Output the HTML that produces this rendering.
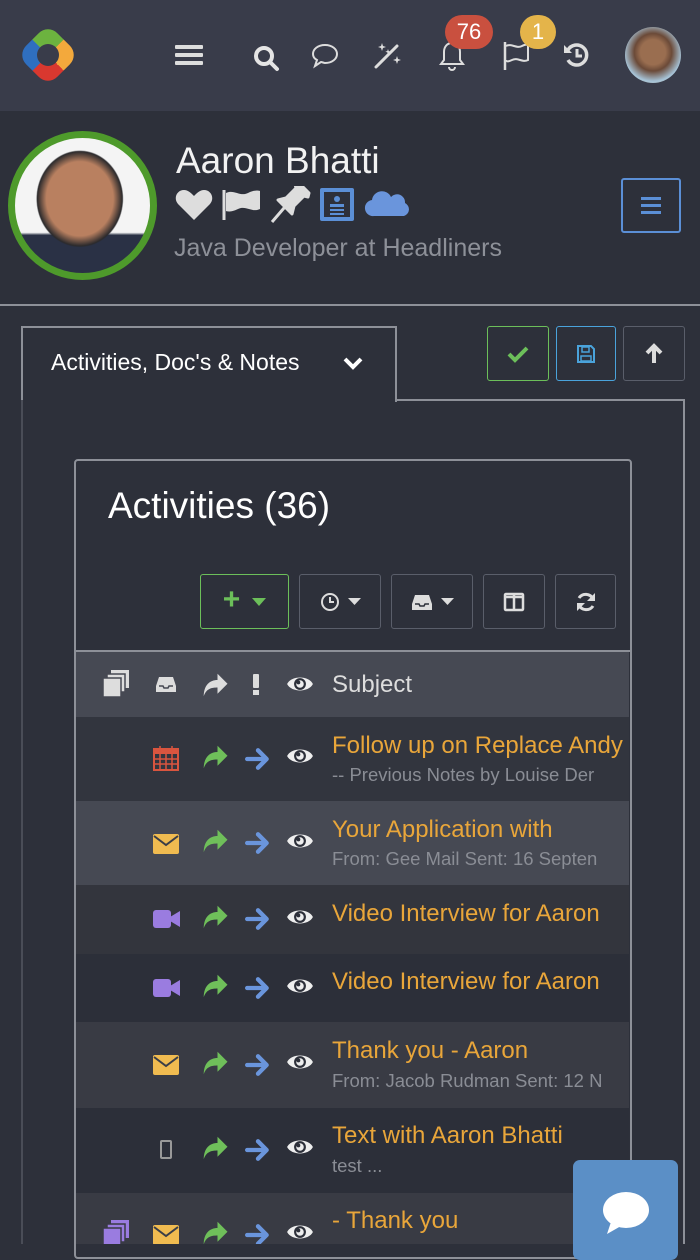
<!DOCTYPE html>
<html><head><meta charset="utf-8"><style>
*{margin:0;padding:0;box-sizing:border-box}
body{width:700px;height:1244px;overflow:hidden;background:#2d303a;font-family:"Liberation Sans",sans-serif;position:relative;color:#fff}
.a{position:absolute}
.top{left:0;top:0;width:700px;height:111px;background:#393c4a}
.btn{position:absolute;border:1.5px solid #5a5e6a;border-radius:3px;display:flex;align-items:center;justify-content:center}
.row{position:absolute;left:76px;width:553px}
.t{position:absolute;font-size:24px;color:#e9a63a;white-space:nowrap}
.s{position:absolute;font-size:18.5px;color:#8a8d95;white-space:nowrap}
.clip{position:absolute;left:0;top:0;width:629px;height:1244px;overflow:hidden}
svg{display:block}
</style></head><body>
<svg width="0" height="0" style="position:absolute">
<defs>
<symbol id="rep" viewBox="0 0 24 24"><path d="M3 21C3 12 8 8 14 8V3l8 8-8 8v-5C9 14 5 15 3 21Z" fill="#6fbf5a"/></symbol>
<symbol id="arr" viewBox="0 0 24 24"><path d="M2 12h17M12 4l8 8-8 8" stroke="#6a95dc" stroke-width="4" fill="none" stroke-linecap="round" stroke-linejoin="round"/></symbol>
<symbol id="eye" viewBox="0 0 26 18"><path d="M1 9C5 1 21 1 25 9C21 17 5 17 1 9Z" fill="#eee"/><circle cx="13" cy="9" r="5.5" fill="#2d303a"/><circle cx="13" cy="9" r="3.5" fill="#eee"/><circle cx="11.5" cy="7.5" r="1.8" fill="#2d303a"/></symbol>
<symbol id="env" viewBox="0 0 26 20"><rect x="0" y="0" width="26" height="20" rx="2" fill="#f0bb50"/><path d="M1 2l12 9 12-9" stroke="#3a3d47" stroke-width="2" fill="none"/></symbol>
<symbol id="vid" viewBox="0 0 28 20"><rect x="0" y="1" width="18" height="18" rx="3" fill="#9a7ce0"/><path d="M17 8l10-6v16l-10-6z" fill="#9a7ce0"/></symbol>
</defs></svg>

<div class="a top"></div>
<!-- logo -->
<div class="a" style="left:26px;top:33px;width:44px;height:44px;transform:rotate(45deg);border-radius:13px;background:conic-gradient(from 0deg,#f3a93c 0 25%,#d9382f 25% 50%,#2f6fc0 50% 75%,#6cb33f 75% 100%)"></div>
<div class="a" style="left:37px;top:44px;width:22px;height:22px;border-radius:50%;background:#393c4a"></div>
<!-- hamburger -->
<div class="a" style="left:175px;top:45px;width:28px;height:4px;background:#ddd;border-radius:1px;box-shadow:0 8px 0 #ddd,0 16px 0 #ddd"></div>
<svg class="a" style="left:252px;top:44px" width="28" height="28" viewBox="0 0 28 28"><circle cx="12" cy="12" r="8" stroke="#e5e5e5" stroke-width="4" fill="none"/><path d="M18 18l7 7" stroke="#e5e5e5" stroke-width="4" stroke-linecap="round"/></svg>
<svg class="a" style="left:310px;top:42px" width="30" height="28" viewBox="0 0 30 28"><path d="M15 3C8 3 3 7 3 12c0 3 2 5 4 6l-2 6 6-4c1 0 3 1 4 1 7 0 12-4 12-9S22 3 15 3Z" stroke="#ddd" stroke-width="2" fill="none"/></svg>
<svg class="a" style="left:373px;top:40px" width="30" height="30" viewBox="0 0 30 30"><path d="M3 27L24 6" stroke="#ddd" stroke-width="3" stroke-linecap="round"/><path d="M9 3l1 3 3 1-3 1-1 3-1-3-3-1 3-1zM24 16l1 3 3 1-3 1-1 3-1-3-3-1 3-1zM15 9l.7 2 2 .7-2 .7-.7 2-.7-2-2-.7 2-.7z" fill="#ddd"/></svg>
<svg class="a" style="left:438px;top:40px" width="28" height="32" viewBox="0 0 28 32"><path d="M14 3c-5 0-8 4-8 9v8l-3 4h22l-3-4v-8c0-5-3-9-8-9Z" stroke="#ddd" stroke-width="2" fill="none"/><path d="M11 27a3 3 0 0 0 6 0" stroke="#ddd" stroke-width="2" fill="none"/></svg>
<div class="a" style="left:445px;top:15px;width:48px;height:34px;border-radius:17px;background:#c9503f;font-size:22px;text-align:center;line-height:34px">76</div>
<svg class="a" style="left:502px;top:40px" width="30" height="32" viewBox="0 0 30 32"><path d="M3 2v28" stroke="#ddd" stroke-width="2.5"/><path d="M4 6c6-3 10 3 16 0s6 0 6 0v14c-6 3-10-3-16 0s-6 0-6 0" stroke="#ddd" stroke-width="2" fill="none"/></svg>
<div class="a" style="left:520px;top:15px;width:36px;height:34px;border-radius:17px;background:#e4b44a;font-size:22px;text-align:center;line-height:34px">1</div>
<svg class="a" style="left:562px;top:40px" width="30" height="30" viewBox="0 0 30 30"><path d="M6 10a10 10 0 1 1 0 10" stroke="#ddd" stroke-width="3.5" fill="none"/><path d="M2 5v8h8z" fill="#ddd"/><path d="M15 9v7h5" stroke="#ddd" stroke-width="3" fill="none"/></svg>
<div class="a" style="left:625px;top:27px;width:56px;height:56px;border-radius:50%;background:radial-gradient(circle at 50% 45%,#9a6e50 0 30%,#6b4a38 45%,#a7c4d8 70%,#b79f7e 100%)"></div>

<!-- profile -->
<div class="a" style="left:8px;top:131px;width:149px;height:149px;border-radius:50%;border:7px solid #4e9a2b;background:radial-gradient(ellipse 45% 50% at 48% 45%,#b98060 0 55%,#2b2a2c 70%,transparent 72%),linear-gradient(#f4f4f4 0 70%,#2a3145 72%)"></div>
<div class="a" style="left:176px;top:140px;font-size:37px;color:#f2f2f2">Aaron Bhatti</div>
<svg class="a" style="left:174px;top:186px" width="240" height="38" viewBox="0 0 240 38">
<path d="M20 34L4 18C-1 12 3 4 10 4c4 0 7 3 10 6 3-3 6-6 10-6 7 0 11 8 6 14Z" fill="#ddd"/>
<path d="M50 4v30" stroke="#ddd" stroke-width="3"/><path d="M52 7c8-4 14 4 22 0s12-2 12-2v18c-8 4-14-4-22 0s-12 2-12 2Z" fill="#ddd"/>
<path d="M98 36l12-14M104 14l14 14 2-8 10-10 4 1 1-4-10-10-4 1 1 4-10 10z" stroke="#ddd" stroke-width="3" fill="#ddd" stroke-linejoin="round"/>
<rect x="146" y="2" width="34" height="33" rx="2" fill="#5b8fd6"/><rect x="150" y="6" width="26" height="25" fill="#2d303a"/><circle cx="163" cy="13" r="3" fill="#5b8fd6"/><rect x="156" y="18" width="14" height="3" fill="#5b8fd6"/><rect x="156" y="23" width="14" height="2" fill="#5b8fd6"/><rect x="156" y="27" width="14" height="2" fill="#5b8fd6"/>
<path d="M200 30a8 8 0 0 1-2-16 10 10 0 0 1 19-3 8 8 0 0 1 14 6 7 7 0 0 1-1 13z" fill="#6a95dc"/>
</svg>
<div class="a" style="left:174px;top:234px;font-size:25px;color:#8d9098;font-weight:300">Java Developer at Headliners</div>
<div class="a" style="left:621px;top:178px;width:60px;height:55px;border:2px solid #5b8fd6;border-radius:3px"></div>
<div class="a" style="left:641px;top:197px;width:20px;height:3px;background:#5b8fd6;box-shadow:0 7px 0 #5b8fd6,0 14px 0 #5b8fd6"></div>

<div class="a" style="left:0;top:304px;width:700px;height:2px;background:#8d9098"></div>

<!-- tab panel -->
<div class="a" style="left:21px;top:326px;width:376px;height:76px;border:2px solid #8d9098;border-bottom:none;background:#2d303a"></div>
<div class="a" style="left:395px;top:399px;width:290px;height:2px;background:#8d9098"></div>
<div class="a" style="left:683px;top:399px;width:2px;height:845px;background:#8d9098"></div>
<div class="a" style="left:21px;top:400px;width:2px;height:844px;background:#4a4d57"></div>
<div class="a" style="left:51px;top:349px;font-size:23px;color:#fff">Activities, Doc's &amp; Notes</div>
<svg class="a" style="left:342px;top:356px" width="22" height="16" viewBox="0 0 22 16"><path d="M3 3l8 8 8-8" stroke="#fff" stroke-width="4" fill="none"/></svg>
<div class="btn" style="left:487px;top:326px;width:62px;height:55px;border-color:#6cbf5a"><svg width="22" height="18" viewBox="0 0 22 18"><path d="M2 9l6 6L20 3" stroke="#6cbf5a" stroke-width="4" fill="none"/></svg></div>
<div class="btn" style="left:556px;top:326px;width:60px;height:55px;border-color:#4aa3db"><svg width="20" height="20" viewBox="0 0 20 20"><path d="M2 2h13l3 3v13H2z" stroke="#4aa3db" stroke-width="2" fill="none"/><rect x="6" y="3" width="7" height="5" stroke="#4aa3db" stroke-width="1.5" fill="none"/><rect x="5" y="12" width="10" height="5" stroke="#4aa3db" stroke-width="1.5" fill="none"/></svg></div>
<div class="btn" style="left:623px;top:326px;width:62px;height:55px"><svg width="20" height="22" viewBox="0 0 20 22"><path d="M10 20V4M3 10l7-7 7 7" stroke="#ddd" stroke-width="4" fill="none"/></svg></div>

<!-- inner box -->
<div class="a" style="left:74px;top:459px;width:558px;height:800px;border:2px solid #8d9098;border-radius:4px"></div>
<div class="a" style="left:108px;top:485px;font-size:37px;color:#fff">Activities (36)</div>
<div class="btn" style="left:200px;top:574px;width:89px;height:55px;border-color:#6cbf5a"><span style="color:#6cbf5a;font-size:30px;font-weight:bold;margin-right:12px;margin-top:-4px">+</span><svg width="14" height="8"><path d="M0 0h14L7 8z" fill="#6cbf5a"/></svg></div>
<div class="btn" style="left:299px;top:574px;width:82px;height:55px"><svg width="20" height="20" viewBox="0 0 20 20" style="margin-right:8px"><circle cx="10" cy="10" r="8" stroke="#ddd" stroke-width="2" fill="none"/><path d="M10 5v5h4" stroke="#ddd" stroke-width="2" fill="none"/></svg><svg width="13" height="7"><path d="M0 0h13L6.5 7z" fill="#ddd"/></svg></div>
<div class="btn" style="left:391px;top:574px;width:82px;height:55px"><svg width="22" height="18" viewBox="0 0 22 18" style="margin-right:8px"><path d="M4 2h14l3 9v6H1v-6z" fill="#ddd"/><path d="M4 11h4l1 2h4l1-2h4" stroke="#2d303a" stroke-width="1.5" fill="none"/></svg><svg width="13" height="7"><path d="M0 0h13L6.5 7z" fill="#ddd"/></svg></div>
<div class="btn" style="left:483px;top:574px;width:62px;height:55px"><svg width="22" height="20" viewBox="0 0 22 20"><rect x="2" y="2" width="18" height="16" rx="1" stroke="#ddd" stroke-width="2.5" fill="none"/><path d="M11 2v16M2 5h18" stroke="#ddd" stroke-width="2.5"/></svg></div>
<div class="btn" style="left:555px;top:574px;width:61px;height:55px"><svg width="22" height="22" viewBox="0 0 22 22"><path d="M18 8A8 8 0 0 0 4 7M4 14a8 8 0 0 0 14 1" stroke="#ddd" stroke-width="3" fill="none"/><path d="M20 2v8h-8zM2 20v-8h8z" fill="#ddd"/></svg></div>
<div class="a" style="left:74px;top:650px;width:558px;height:2px;background:#8d9098"></div>

<!-- header row -->
<div class="row" style="top:652px;height:65px;background:#464953"></div>
<svg class="a" style="left:103px;top:670px" width="28" height="28" viewBox="0 0 28 28"><rect x="8" y="0" width="18" height="18" fill="#ddd"/><rect x="4" y="4" width="18" height="18" fill="#ddd" stroke="#464953" stroke-width="1.5"/><rect x="0" y="8" width="18" height="19" fill="#ddd" stroke="#464953" stroke-width="1.5"/></svg>
<svg class="a" style="left:155px;top:675px" width="22" height="18" viewBox="0 0 22 18"><path d="M4 2h14l3 9v6H1v-6z" fill="#ddd"/><path d="M4 11h4l1 2h4l1-2h4" stroke="#464953" stroke-width="1.5" fill="none"/></svg>
<svg class="a" style="left:200px;top:670px" width="30" height="30" viewBox="0 0 24 24"><path d="M3 21C3 12 8 8 14 8V3l8 8-8 8v-5C9 14 5 15 3 21Z" fill="#ddd"/></svg>
<div class="a" style="left:253px;top:674px;width:6px;height:14px;background:#ddd;border-radius:1px"></div>
<div class="a" style="left:253px;top:690px;width:6px;height:5px;background:#ddd"></div>
<svg class="a" style="left:286px;top:674px" width="28" height="20"><use href="#eye"/></svg>
<div class="a" style="left:332px;top:671px;font-size:24px;color:#ddd">Subject</div>

<!-- rows -->
<div class="row" style="top:717px;height:84px;background:#32353e"></div>
<div class="row" style="top:801px;height:84px;background:#464953"></div>
<div class="row" style="top:885px;height:69px;background:#33353d"></div>
<div class="row" style="top:954px;height:68px;background:#2c2f39"></div>
<div class="row" style="top:1022px;height:86px;background:#393b44"></div>
<div class="row" style="top:1108px;height:85px;background:#2c2f39"></div>
<div class="row" style="top:1193px;height:51px;background:#393b44"></div>

<div class="clip">
<!-- row1 -->
<svg class="a" style="left:153px;top:745px" width="26" height="26" viewBox="0 0 26 26"><rect x="1" y="4" width="24" height="21" stroke="#d9553f" stroke-width="2" fill="none"/><rect x="1" y="4" width="24" height="5" fill="#d9553f"/><path d="M7 1v6M19 1v6M1 14h24M1 19h24M7 9v16M13 9v16M19 9v16" stroke="#d9553f" stroke-width="1.5"/></svg>
<svg class="a" style="left:200px;top:742px" width="30" height="30"><use href="#rep"/></svg>
<svg class="a" style="left:245px;top:746px" width="26" height="26"><use href="#arr"/></svg>
<svg class="a" style="left:286px;top:746px" width="28" height="20"><use href="#eye"/></svg>
<div class="t" style="left:332px;top:732px">Follow up on Replace Andy</div>
<div class="s" style="left:332px;top:764px">-- Previous Notes by Louise Der</div>
<!-- row2 -->
<svg class="a" style="left:153px;top:834px" width="26" height="20"><use href="#env"/></svg>
<svg class="a" style="left:200px;top:826px" width="30" height="30"><use href="#rep"/></svg>
<svg class="a" style="left:245px;top:830px" width="26" height="26"><use href="#arr"/></svg>
<svg class="a" style="left:286px;top:831px" width="28" height="20"><use href="#eye"/></svg>
<div class="t" style="left:332px;top:816px">Your Application with</div>
<div class="s" style="left:332px;top:848px">From: Gee Mail Sent: 16 Septen</div>
<!-- row3 -->
<svg class="a" style="left:153px;top:909px" width="28" height="20"><use href="#vid"/></svg>
<svg class="a" style="left:200px;top:902px" width="30" height="30"><use href="#rep"/></svg>
<svg class="a" style="left:245px;top:906px" width="26" height="26"><use href="#arr"/></svg>
<svg class="a" style="left:286px;top:907px" width="28" height="20"><use href="#eye"/></svg>
<div class="t" style="left:332px;top:900px">Video Interview for Aaron</div>
<!-- row4 -->
<svg class="a" style="left:153px;top:978px" width="28" height="20"><use href="#vid"/></svg>
<svg class="a" style="left:200px;top:971px" width="30" height="30"><use href="#rep"/></svg>
<svg class="a" style="left:245px;top:975px" width="26" height="26"><use href="#arr"/></svg>
<svg class="a" style="left:286px;top:976px" width="28" height="20"><use href="#eye"/></svg>
<div class="t" style="left:332px;top:968px">Video Interview for Aaron</div>
<!-- row5 -->
<svg class="a" style="left:153px;top:1055px" width="26" height="20"><use href="#env"/></svg>
<svg class="a" style="left:200px;top:1048px" width="30" height="30"><use href="#rep"/></svg>
<svg class="a" style="left:245px;top:1052px" width="26" height="26"><use href="#arr"/></svg>
<svg class="a" style="left:286px;top:1052px" width="28" height="20"><use href="#eye"/></svg>
<div class="t" style="left:332px;top:1037px">Thank you - Aaron</div>
<div class="s" style="left:332px;top:1070px">From: Jacob Rudman Sent: 12 N</div>
<!-- row6 -->
<div class="a" style="left:160px;top:1140px;width:12px;height:19px;border:2px solid #999;border-radius:2px"></div>
<svg class="a" style="left:200px;top:1133px" width="30" height="30"><use href="#rep"/></svg>
<svg class="a" style="left:245px;top:1137px" width="26" height="26"><use href="#arr"/></svg>
<svg class="a" style="left:286px;top:1137px" width="28" height="20"><use href="#eye"/></svg>
<div class="t" style="left:332px;top:1122px">Text with Aaron Bhatti</div>
<div class="s" style="left:332px;top:1155px">test ...</div>
<!-- row7 -->
<svg class="a" style="left:103px;top:1220px" width="28" height="28" viewBox="0 0 28 28"><rect x="8" y="0" width="18" height="18" fill="#9a7ce0"/><rect x="4" y="4" width="18" height="18" fill="#9a7ce0" stroke="#393b44" stroke-width="1.5"/><rect x="0" y="8" width="18" height="19" fill="#9a7ce0" stroke="#393b44" stroke-width="1.5"/></svg>
<svg class="a" style="left:153px;top:1225px" width="26" height="20"><use href="#env"/></svg>
<svg class="a" style="left:200px;top:1218px" width="30" height="30"><use href="#rep"/></svg>
<svg class="a" style="left:245px;top:1222px" width="26" height="26"><use href="#arr"/></svg>
<svg class="a" style="left:286px;top:1222px" width="28" height="20"><use href="#eye"/></svg>
<div class="t" style="left:332px;top:1207px">- Thank you</div>
</div>

<!-- chat button -->
<div class="a" style="left:573px;top:1160px;width:105px;height:100px;background:#5b8fc6;border-radius:7px"></div>
<svg class="a" style="left:601px;top:1190px" width="50" height="46" viewBox="0 0 50 46"><ellipse cx="25" cy="20" rx="23" ry="18" fill="#fff"/><path d="M10 32l-4 12 14-8z" fill="#fff"/></svg>
</body></html>
